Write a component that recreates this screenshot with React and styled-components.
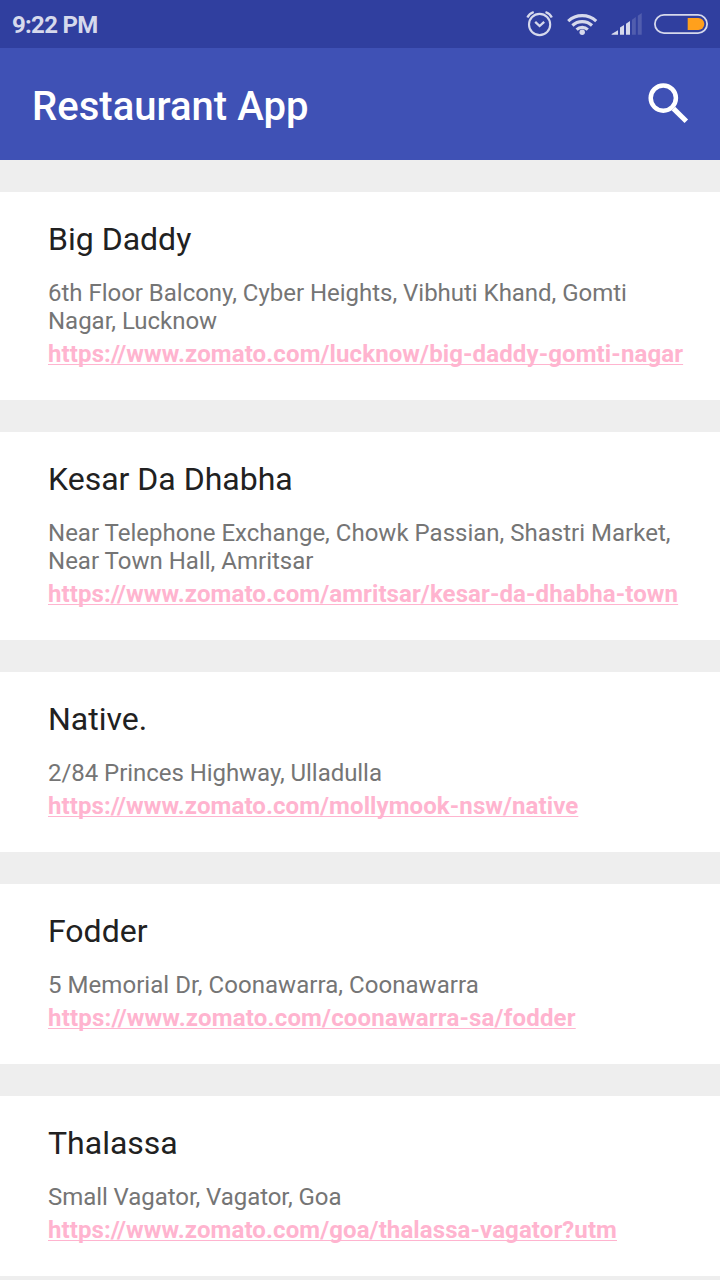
import React from 'react';
import styled, { createGlobalStyle } from 'styled-components';

const GlobalStyle = createGlobalStyle`
  * { box-sizing: border-box; }
  body { margin: 0; background: #eee; font-family: Roboto, sans-serif; }
`;

const Screen = styled.div`
  width: 720px;
  height: 1280px;
  overflow: hidden;
  background: #eee;
`;

const StatusBar = styled.header`
  height: 48px;
  padding-left: 12px;
  display: flex;
  align-items: center;
  justify-content: space-between;
  background: #303f9f;
  color: #d6d9ec;
`;

const Clock = styled.span`
  padding-top: 2px;
  font-size: 24px;
  font-weight: 700;
  line-height: 28px;
  letter-spacing: -0.72px;
`;

const StatusIcons = styled.div`
  display: flex;
  align-items: center;
  height: 48px;
  padding-right: 12px;
`;

const StatusIcon = styled.svg`
  display: block;
  flex: none;
  margin-left: ${(p) => p.$gap || 0}px;
`;

const Toolbar = styled.div`
  height: 112px;
  padding: 0 28px 0 32px;
  display: flex;
  align-items: center;
  justify-content: space-between;
  background: #3f51b5;
  color: #fff;
`;

const Title = styled.h1`
  margin: 6px 0 0;
  font-size: 40px;
  font-weight: 500;
  line-height: 48px;
  letter-spacing: 0.03px;
`;

const SearchButton = styled.button`
  width: 48px;
  height: 48px;
  padding: 0;
  border: 0;
  background: none;
  color: inherit;
`;

const List = styled.main`
  display: flex;
  flex-direction: column;
  gap: 32px;
  padding-top: 32px;
`;

const Card = styled.article`
  padding: 28px 32px 32px 48px;
  background: #fff;
`;

const Name = styled.h2`
  margin: 0 0 21px;
  font-size: 32px;
  font-weight: 400;
  line-height: 38px;
  color: #212121;
`;

const Address = styled.p`
  margin: 0 0 5px;
  font-size: 24px;
  line-height: 28px;
  letter-spacing: ${(p) => p.$tracking}px;
  color: #757575;
`;

const Link = styled.a`
  display: block;
  font-size: 24px;
  font-weight: 700;
  line-height: 28px;
  letter-spacing: ${(p) => p.$tracking}px;
  color: #ffb4cf;
  white-space: nowrap;
  text-decoration: underline 1px;
  text-underline-offset: 2px;
  text-decoration-skip-ink: none;
`;

const restaurants = [
  { name: 'Big Daddy', address: ['6th Floor Balcony, Cyber Heights, Vibhuti Khand, Gomti', 'Nagar, Lucknow'], url: 'https://www.zomato.com/lucknow/big-daddy-gomti-nagar', addressTracking: -0.02, urlTracking: 0.115 },
  { name: 'Kesar Da Dhabha', address: ['Near Telephone Exchange, Chowk Passian, Shastri Market,', 'Near Town Hall, Amritsar'], url: 'https://www.zomato.com/amritsar/kesar-da-dhabha-town', addressTracking: 0.01, urlTracking: 0.1 },
  { name: 'Native.', address: ['2/84 Princes Highway, Ulladulla'], url: 'https://www.zomato.com/mollymook-nsw/native', addressTracking: -0.05, urlTracking: 0.095 },
  { name: 'Fodder', address: ['5 Memorial Dr, Coonawarra, Coonawarra'], url: 'https://www.zomato.com/coonawarra-sa/fodder', addressTracking: 0.05, urlTracking: 0.185 },
  { name: 'Thalassa', address: ['Small Vagator, Vagator, Goa'], url: 'https://www.zomato.com/goa/thalassa-vagator?utm', addressTracking: -0.06, urlTracking: 0.1 },
];

const AlarmIcon = () => (
  <StatusIcon width="28" height="28" viewBox="0 0 28 28" fill="none" stroke="currentColor">
    <circle cx="13.6" cy="14.5" r="10.6" strokeWidth="2.1" />
    <path d="M9.2 11.8 13.6 16l4.6-4.2" strokeWidth="2.3" />
    <path d="M1.4 7.4C2.6 4.9 4.8 3 7.7 2M25.8 7.4C24.6 4.9 22.4 3 19.5 2" strokeWidth="2.3" />
  </StatusIcon>
);

const WifiIcon = () => (
  <StatusIcon $gap={13} width="32" height="28" viewBox="0 0 32 28" fill="none" stroke="currentColor" strokeWidth="3.1">
    <path d="M1.2 11.2a20.5 20.5 0 0 1 28 0M5.4 15.5a14.4 14.4 0 0 1 19.6 0M9.6 19.6a8.2 8.2 0 0 1 11.2 0" />
    <circle cx="15.2" cy="22.2" r="2.7" fill="currentColor" stroke="none" />
  </StatusIcon>
);

const SignalIcon = () => (
  <StatusIcon $gap={12} width="32" height="28" viewBox="0 0 32 28" fill="currentColor">
    <path d="M.6 24.7v-.8L7 20.3v4.4zM9 24.7v-7.3l4-2.5v9.8zM15 24.7v-11l4-2.8v13.8z" />
    <path opacity="0.2" d="M21 24.7V9.8L24.8 7v17.7zM26.8 24.7v-19l3.9-2.7v21.7z" />
  </StatusIcon>
);

const BatteryIcon = () => (
  <StatusIcon $gap={11} width="54" height="20" viewBox="0 0 54 20" fill="none">
    <rect x="0.9" y="0.9" width="52.2" height="18.2" rx="9.1" stroke="currentColor" strokeWidth="1.8" />
    <path d="M33.7 4h10.6a6 6 0 0 1 0 12H33.7z" fill="#ffa01c" />
  </StatusIcon>
);

const SearchIcon = () => (
  <svg width="48" height="48" viewBox="0 0 48 48" fill="none" stroke="currentColor">
    <circle cx="19.3" cy="18.1" r="12.6" strokeWidth="4.5" />
    <path d="m29.5 28.6 12.8 12.6" strokeWidth="5" />
  </svg>
);

export default function App() {
  return (
    <Screen>
      <GlobalStyle />
      <StatusBar>
        <Clock>9:22 PM</Clock>
        <StatusIcons>
          <AlarmIcon />
          <WifiIcon />
          <SignalIcon />
          <BatteryIcon />
        </StatusIcons>
      </StatusBar>
      <Toolbar>
        <Title>Restaurant App</Title>
        <SearchButton aria-label="Search"><SearchIcon /></SearchButton>
      </Toolbar>
      <List>
        {restaurants.map((r) => (
          <Card key={r.name}>
            <Name>{r.name}</Name>
            <Address $tracking={r.addressTracking}>
              {r.address.map((line, i) => (
                <React.Fragment key={line}>{i > 0 && <br />}{line}</React.Fragment>
              ))}
            </Address>
            <Link $tracking={r.urlTracking}>{r.url}</Link>
          </Card>
        ))}
      </List>
    </Screen>
  );
}
